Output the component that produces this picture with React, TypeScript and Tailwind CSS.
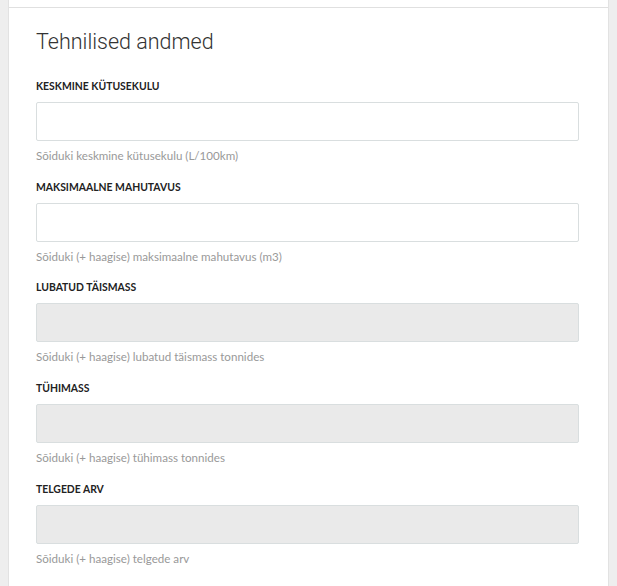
const fields = [
  { label: "Keskmine kütusekulu", help: "Sõiduki keskmine kütusekulu (L/100km)", disabled: false },
  { label: "Maksimaalne mahutavus", help: "Sõiduki (+ haagise) maksimaalne mahutavus (m3)", disabled: false },
  { label: "Lubatud täismass", help: "Sõiduki (+ haagise) lubatud täismass tonnides", disabled: true },
  { label: "Tühimass", help: "Sõiduki (+ haagise) tühimass tonnides", disabled: true },
  { label: "Telgede arv", help: "Sõiduki (+ haagise) telgede arv", disabled: true },
]

export default function App() {
  return (
    <div className="min-h-[586px] bg-[#eeeeee] px-[8px] font-['Lato','Open_Sans',sans-serif]">
      <div className="min-h-[586px] bg-white border-x border-[#e2e2e2]">
        <div className="h-[8px] border-b border-[#e0e0e0]" />
        <div className="pl-[27px] pr-[29px] pt-[20px]">
          <h2 className="font-['Roboto',sans-serif] font-light text-[21.5px] leading-[28px] text-[#333333]">
            Tehnilised andmed
          </h2>
          <div className="mt-[22px] flex flex-col gap-[14.7px]">
            {fields.map((f) => (
              <div key={f.label}>
                <label className="block text-[10.4px] leading-[16px] font-bold uppercase text-[#222222]">
                  {f.label}
                </label>
                <input
                  type="text"
                  disabled={f.disabled}
                  className={
                    "mt-[8px] block w-full h-[39px] rounded-[2px] border border-[#d9dedf] px-3 text-sm outline-none " +
                    (f.disabled ? "bg-[#eaeaea]" : "bg-white")
                  }
                />
                <p className="mt-[6px] text-[11.6px] leading-[17px] text-[#999999]">{f.help}</p>
              </div>
            ))}
          </div>
        </div>
      </div>
    </div>
  )
}
